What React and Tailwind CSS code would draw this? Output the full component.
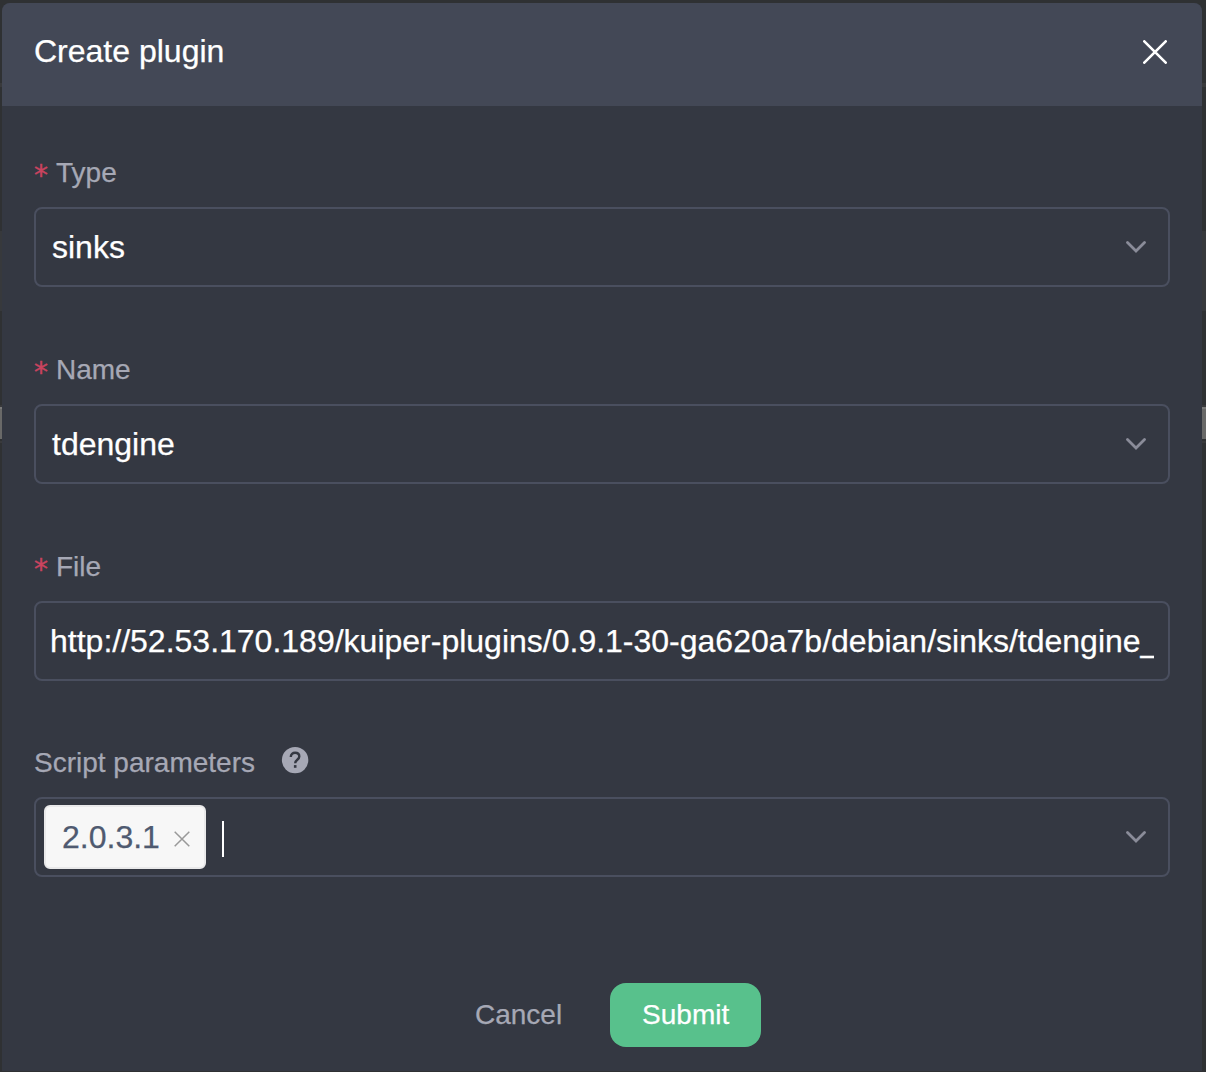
import React from "react";

function Backdrop({ width }) {
  return (
    <div className={`${width} flex shrink-0 flex-col bg-[#2f3133]`}>
      <div className="mt-[83px] h-1 bg-[#393a3c]" />
      <div className="mt-36 h-20 bg-[#37393c]" />
      <div className="mt-[94px] h-0.5 bg-[#393a3c]" />
      <div className="h-0.5 bg-[#7a7a79]" />
      <div className="h-[30px] bg-[#696968]" />
      <div className="mt-0.5 h-0.5 bg-[#393a3c]" />
    </div>
  );
}

function Chevron() {
  return (
    <svg className="mr-[22px] ml-auto shrink-0" width="20" height="12" viewBox="0 0 20 12" fill="none" stroke="#8a8c99" strokeWidth="2.8" strokeLinecap="round" strokeLinejoin="miter">
      <path d="M1.5 1.6 10 10 18.5 1.6" />
    </svg>
  );
}

function Label({ required, children }) {
  return (
    <div className="flex h-8 items-center text-[28px] leading-8 text-[#a6a8b5]">
      {required && (
        <span className="w-[22px] pt-[6px] font-['DejaVu_Sans'] text-[28px] leading-8 text-[#c9445f] [-webkit-text-stroke:0.4px_#c9445f]">*</span>
      )}
      {children}
    </div>
  );
}

function Field({ children, className = "" }) {
  return (
    <div className={`flex h-20 items-center overflow-hidden rounded-lg border-2 border-[#4a4f5f] text-[32px] whitespace-nowrap text-white ${className}`}>
      {children}
    </div>
  );
}

export default function App() {
  return (
    <div className="flex h-[1072px] w-[1206px] overflow-hidden bg-[#2f3133] font-['Liberation_Sans',Arial,sans-serif] [-webkit-text-stroke-width:0.25px]">
      <Backdrop width="w-0.5" />
      <section className="mt-[3px] mb-px flex w-[1200px] shrink-0 flex-col overflow-hidden rounded-t-lg bg-[#343842]">
        <header className="flex h-[103px] shrink-0 items-start justify-between bg-[#434856] pr-[35px] pl-8">
          <h1 className="mt-[30px] text-[32px] leading-9 text-white">Create plugin</h1>
          <svg className="mt-[37px]" width="24" height="24" viewBox="0 0 24 24" stroke="white" strokeWidth="2.6" strokeLinecap="round">
            <path d="M1.3 1.3 22.7 22.7M22.7 1.3 1.3 22.7" />
          </svg>
        </header>
        <form className="flex flex-col px-8 pt-[51px]">
          <div className="flex flex-col">
            <Label required>Type</Label>
            <Field className="mt-[18px] pl-4">
              <span>sinks</span>
              <Chevron />
            </Field>
          </div>
          <div className="mt-[67px] flex flex-col">
            <Label required>Name</Label>
            <Field className="mt-[18px] pl-4">
              <span>tdengine</span>
              <Chevron />
            </Field>
          </div>
          <div className="mt-[67px] flex flex-col">
            <Label required>File</Label>
            <Field className="mt-[18px] px-3.5">
              <span className="overflow-hidden">http://52.53.170.189/kuiper-plugins/0.9.1-30-ga620a7b/debian/sinks/tdengine_</span>
            </Field>
          </div>
          <div className="mt-[66px] flex flex-col">
            <Label>
              <span>Script parameters</span>
              <svg className="mb-1.5 ml-[27px] overflow-visible" width="27" height="27" viewBox="0.4 0.4 27 27" fill="none">
                <circle cx="13.5" cy="13.5" r="13.2" fill="#a6a8b5" />
                <path d="M9.2 10.3c0-2.5 1.9-4.1 4.3-4.1s4.2 1.5 4.2 3.8c0 3.1-4.1 3.3-4.1 6.6" stroke="#343842" strokeWidth="2.4" />
                <path d="M12.3 18.5h2.6v2.7h-2.6z" fill="#343842" />
              </svg>
            </Label>
            <Field className="mt-[18px] pl-2">
              <div className="flex h-16 w-[162px] shrink-0 items-center rounded-md border-2 border-[#e9e9ea] bg-[#f7f7f7] pl-4 text-[#4f5a70]">
                <span>2.0.3.1</span>
                <svg className="mt-[3px] ml-[14px]" width="16" height="16" viewBox="0 0 16 16" stroke="#999" strokeWidth="1.5">
                  <path d="M.7.7l14.6 14.6M15.3.7.7 15.3" />
                </svg>
              </div>
              <div className="mt-1 ml-4 h-9 w-0.5 bg-white" />
              <Chevron />
            </Field>
          </div>
        </form>
        <footer className="mt-[106px] flex h-16 shrink-0 items-center pl-[473px] text-[28px]">
          <button className="text-[#a6a8b5]">Cancel</button>
          <button className="ml-[48px] h-16 w-[151px] rounded-2xl bg-[#58c18c] text-white">Submit</button>
        </footer>
      </section>
      <Backdrop width="w-1" />
    </div>
  );
}
